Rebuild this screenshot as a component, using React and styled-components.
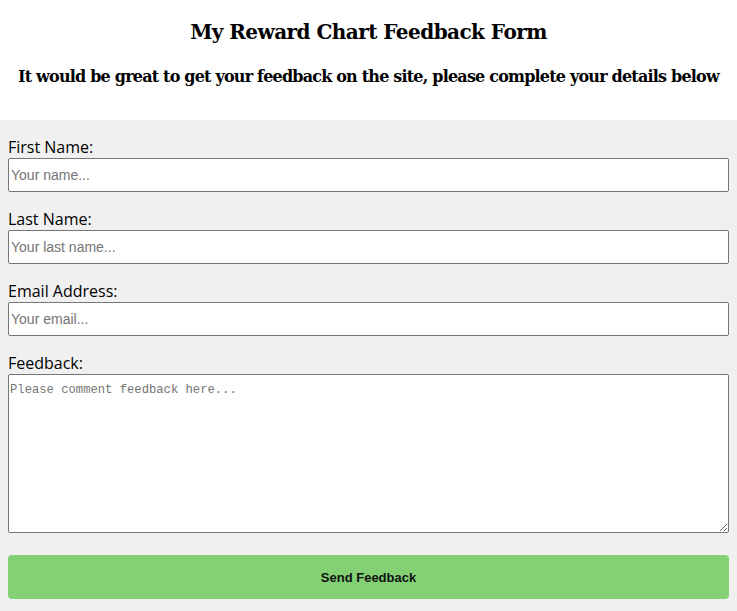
import React from "react";
import styled, { createGlobalStyle } from "styled-components";

const GlobalStyle = createGlobalStyle`
  html, body {
    margin: 0;
    padding: 0;
    background: #ffffff;
  }
  * {
    box-sizing: border-box;
  }
`;

const Page = () => {
  return (
    <PageWrapper>
      <GlobalStyle />
      <Header>
        <Title>My Reward Chart Feedback Form</Title>
        <Subtitle>
          It would be great to get your feedback on the site, please complete
          your details below
        </Subtitle>
      </Header>
      <FormWrapper onSubmit={(e) => e.preventDefault()}>
        <Field>
          <Label htmlFor="first">First Name:</Label>
          <Input id="first" type="text" placeholder="Your name..." />
        </Field>
        <Field>
          <Label htmlFor="last">Last Name:</Label>
          <Input id="last" type="text" placeholder="Your last name..." />
        </Field>
        <Field>
          <Label htmlFor="email">Email Address:</Label>
          <Input id="email" type="email" placeholder="Your email..." />
        </Field>
        <Field>
          <Label htmlFor="feedback">Feedback:</Label>
          <TextArea id="feedback" placeholder="Please comment feedback here..." />
        </Field>
        <SendButton type="submit">Send Feedback</SendButton>
      </FormWrapper>
    </PageWrapper>
  );
};

export default Page;

const PageWrapper = styled.div`
  min-height: 611px;
  display: flex;
  flex-direction: column;
  background: #f0f0f0;
`;

const Header = styled.header`
  background: #ffffff;
  text-align: center;
  padding: 17px 8px 0;
  height: 120px;
  font-family: "DejaVu Serif", "Liberation Serif", serif;
  color: #000;
`;

const Title = styled.h1`
  margin: 0;
  font-size: 20px;
  line-height: 30px;
  font-weight: bold;
  letter-spacing: -0.55px;
`;

const Subtitle = styled.h2`
  margin: 17px 0 0;
  font-size: 16px;
  line-height: 26px;
  font-weight: bold;
  letter-spacing: -0.8px;
  white-space: nowrap;
`;

const FormWrapper = styled.form`
  display: flex;
  flex-direction: column;
  gap: 16px;
  padding: 16px 8px 12px;
  background: #f0f0f0;
`;

const Field = styled.div`
  display: flex;
  flex-direction: column;
`;

const Label = styled.label`
  font-family: "Open Sans", "Noto Sans", sans-serif;
  font-size: 16px;
  line-height: 22px;
  color: #000;
`;

const Input = styled.input`
  height: 34px;
  width: 100%;
  padding: 0 2px;
  border: 1px solid #767676;
  border-radius: 2px;
  background: #fff;
  font-family: "Liberation Sans", Arial, sans-serif;
  font-size: 14px;
  color: #000;

  &::placeholder {
    color: #757575;
  }
`;

const TextArea = styled.textarea`
  height: 159px;
  width: 100%;
  padding: 8px 1px;
  border: 1px solid #767676;
  border-radius: 2px;
  background: #fff;
  font-family: "Liberation Mono", "DejaVu Sans Mono", monospace;
  font-size: 12.2px;
  resize: vertical;

  &::placeholder {
    color: #757575;
  }
`;

const SendButton = styled.button`
  margin-top: 6px;
  height: 44px;
  width: 100%;
  border: none;
  border-radius: 4px;
  background: #83d174;
  font-family: "Liberation Sans", Arial, sans-serif;
  font-size: 13px;
  font-weight: bold;
  color: #111;
  cursor: pointer;
`;
